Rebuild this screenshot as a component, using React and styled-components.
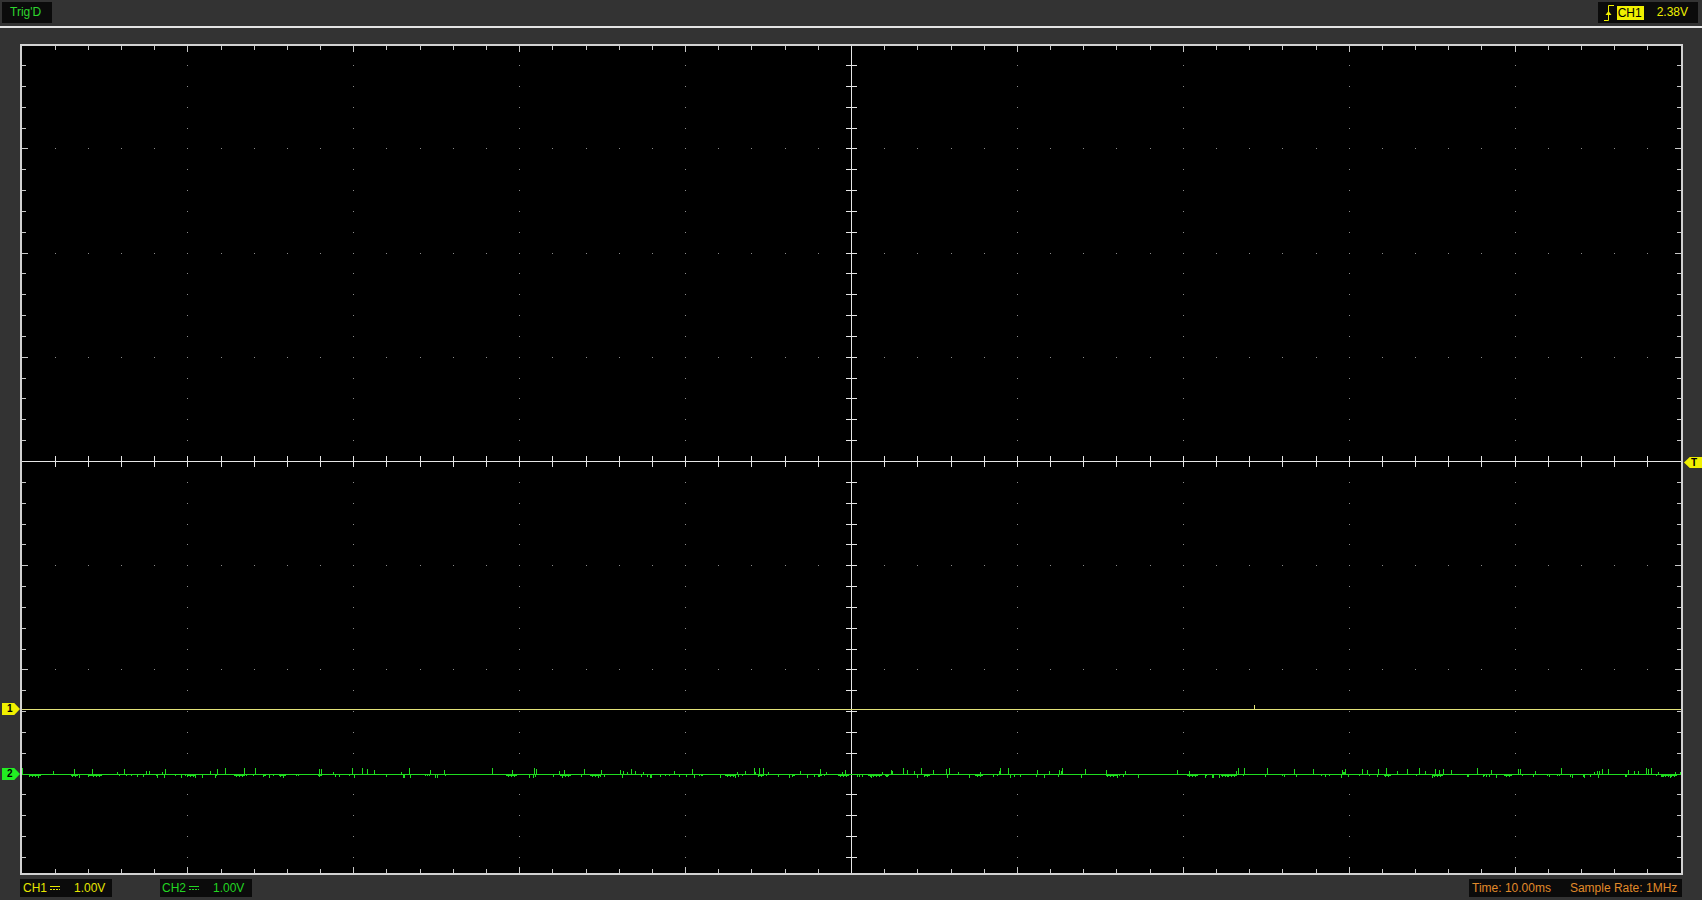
import React from 'react';
import styled, { createGlobalStyle } from 'styled-components';

const Global = createGlobalStyle`
  html, body {
    margin: 0;
    padding: 0;
    background: #333333;
  }
  body {
    font-family: "Liberation Sans", Arial, sans-serif;
  }
`;

// plot geometry (inner area of the frame)
const W = 1659;
const H = 827;
const CX = 829;
const CY = 415;
const DX = 165.9;
const DY = 104.2;
const MX = DX / 5;
const MY = DY / 5;
const px = v => Math.round(v) + 0.5;

const Screen = styled.div`
  width: 1702px;
  height: 900px;
  display: flex;
  flex-direction: column;
  background: #333333;
  overflow: hidden;
`;

const TopBar = styled.div`
  height: 26px;
  box-sizing: border-box;
  padding: 2px 4px 0 2px;
  display: flex;
  justify-content: space-between;
  align-items: flex-start;
`;

const Label = styled.div`
  height: ${p => p.$h || 21}px;
  box-sizing: border-box;
  background: #0b0b0b;
  color: ${p => p.$color};
  font-size: 12px;
  line-height: ${p => p.$h || 21}px;
  display: flex;
  align-items: center;
  white-space: nowrap;
  padding: ${p => p.$pad || '0 8px'};
  width: ${p => (p.$w ? p.$w + 'px' : 'auto')};
`;

const Badge = styled.span`
  background: #f0f000;
  color: #000;
  height: 14px;
  line-height: 14px;
  padding: 0 2px 0 1px;
  margin: 0 13px 0 3px;
  font-size: 12px;
`;

const Rule = styled.div`
  height: 2px;
  background: #e4e4e4;
`;

const PlotArea = styled.div`
  position: relative;
  margin: 16px 0 0 20px;
  width: 1663px;
  height: 831px;
  box-sizing: border-box;
  border: 2px solid #d2d2d2;
  background: #000;
`;

const Grid = styled.svg`
  display: block;
`;

const Marker = styled.div`
  position: absolute;
  top: ${p => p.$top}px;
  left: ${p => p.$left}px;
  width: 18px;
  height: ${p => p.$h || 12}px;
  background: ${p => p.$color};
  color: #000;
  font-size: 10px;
  font-weight: bold;
  line-height: ${p => p.$h || 12}px;
  box-sizing: border-box;
  padding: ${p => (p.$left < 0 ? '0 0 0 5px' : '0 0 0 7px')};
  clip-path: ${p =>
    p.$left < 0
      ? 'polygon(0 0, 68% 0, 100% 50%, 68% 100%, 0 100%)'
      : 'polygon(32% 0, 100% 0, 100% 100%, 32% 100%, 0 50%)'};
`;

const BottomBar = styled.div`
  margin-top: 4px;
  height: 18px;
  display: flex;
  padding: 0 20px;
  gap: 48px;
`;

const Spacer = styled.div`
  flex: 1;
`;

const Gap = styled.span`
  display: inline-block;
  width: ${p => p.$w}px;
`;

const DcSign = ({ color }) => (
  <svg width="11" height="6" viewBox="0 0 11 6" style={{ margin: '0 3px 0 3px' }}>
    <path d="M0 1.5H10" stroke={color} strokeWidth="1" />
    <path d="M0 4.5H10" stroke={color} strokeWidth="1" strokeDasharray="2 1" />
  </svg>
);

const EdgeIcon = () => (
  <svg width="10" height="18" viewBox="0 0 10 18">
    <path d="M0 16.5H4.5V1.5H10" stroke="#f0f000" strokeWidth="1" fill="none" />
    <path d="M1.5 11L4.5 7L7.5 11Z" fill="#f0f000" />
  </svg>
);

function buildGrid() {
  let dots = '';
  for (let i = -5; i <= 5; i++) {
    const x = CX + i * DX;
    if (i === 0 || x <= 1 || x >= W - 1) continue;
    for (let k = -25; k <= 25; k++) {
      const y = CY + k * MY;
      if (y <= 2 || y >= H - 2) continue;
      dots += `M${Math.round(x)} ${px(y)}h1`;
    }
  }
  for (let j = -4; j <= 4; j++) {
    const y = CY + j * DY;
    if (j === 0 || y <= 1 || y >= H - 1) continue;
    for (let k = -30; k <= 30; k++) {
      const x = CX + k * MX;
      if (x <= 2 || x >= W - 2) continue;
      dots += `M${Math.round(x)} ${px(y)}h1`;
    }
  }

  let edges = '';
  for (let k = -30; k <= 30; k++) {
    const x = CX + k * MX;
    if (x <= 1 || x >= W - 1) continue;
    const len = k % 5 === 0 ? 6 : 4;
    edges += `M${px(x)} 0v${len}M${px(x)} ${H}v-${len}`;
  }
  for (let k = -25; k <= 25; k++) {
    const y = CY + k * MY;
    if (y <= 1 || y >= H - 1) continue;
    const len = k % 5 === 0 ? 6 : 4;
    edges += `M0 ${px(y)}h${len}M${W} ${px(y)}h-${len}`;
  }

  let axes = `M0 ${CY + 0.5}H${W}M${CX + 0.5} 0V${H}`;
  for (let k = -30; k <= 30; k++) {
    const x = CX + k * MX;
    if (k === 0 || x <= 1 || x >= W - 1) continue;
    axes += `M${px(x)} ${CY - 5}v11`;
  }
  for (let k = -25; k <= 25; k++) {
    const y = CY + k * MY;
    if (k === 0 || y <= 1 || y >= H - 1) continue;
    axes += `M${CX - 5} ${px(y)}h11`;
  }
  return { dots, edges, axes };
}

// CH2 trace: flat line with sampling noise
function buildNoise() {
  let s = 4242;
  const rand = () => {
    s = (s * 16807) % 2147483647;
    return s / 2147483647;
  };
  const base = 728;
  let d = `M0 ${base + 0.5}H${W}`;
  let run = 0;
  for (let x = 0; x < W; x++) {
    const r = rand();
    if (r < 0.07) {
      d += `M${x + 0.5} ${base}v-${2 + Math.floor(rand() * 5)}`;
    } else if (r < 0.16) {
      d += `M${x + 0.5} ${base + 1}v${1 + Math.floor(rand() * 3)}`;
    }
    if (run === 0 && rand() < 0.02) run = 3 + Math.floor(rand() * 14);
    if (run > 0) {
      d += `M${x} ${base + 1.5}h1`;
      if (run % 3 === 0) d += `M${x} ${base + 2.5}h1`;
      run--;
    }
  }
  return d;
}

const grid = buildGrid();
const noise = buildNoise();

const Scope = () => (
  <PlotArea>
    <Grid width={W} height={H} viewBox={`0 0 ${W} ${H}`}>
      <path d={grid.dots} stroke="#8c8c8c" strokeWidth="1" />
      <path d={grid.edges} stroke="#c8c8c8" strokeWidth="1" />
      <path d={grid.axes} stroke="#e6e6e6" strokeWidth="1" />
      <path d={`M0 663.5H${W}M1232.5 663V659`} stroke="#e2e27a" strokeWidth="1" />
      <path d={noise} stroke="#1fdc1f" strokeWidth="1" />
    </Grid>
    <Marker $left={-20} $top={657} $color="#f0f000">1</Marker>
    <Marker $left={-20} $top={722} $color="#22ee22">2</Marker>
    <Marker $left={1662} $top={411} $h={11} $color="#f0f000">T</Marker>
  </PlotArea>
);

export default function App() {
  return (
    <Screen>
      <Global />
      <TopBar>
        <Label $color="#2ed62e" $w={50}>Trig'D</Label>
        <Label $color="#f0f000" $pad="0 10px 0 6px">
          <EdgeIcon />
          <Badge>CH1</Badge>
          2.38V
        </Label>
      </TopBar>
      <Rule />
      <Scope />
      <BottomBar>
        <Label $h={18} $w={92} $color="#e6e600" $pad="0 0 0 3px">
          CH1<DcSign color="#e6e600" /><Gap $w={10} />1.00V
        </Label>
        <Label $h={18} $w={92} $color="#22d622" $pad="0 0 0 2px">
          CH2<DcSign color="#22d622" /><Gap $w={10} />1.00V
        </Label>
        <Spacer />
        <Label $h={18} $w={213} $color="#e08a2a" $pad="0 0 0 3px">
          Time: 10.00ms<Gap $w={19} />Sample Rate: 1MHz
        </Label>
      </BottomBar>
    </Screen>
  );
}
